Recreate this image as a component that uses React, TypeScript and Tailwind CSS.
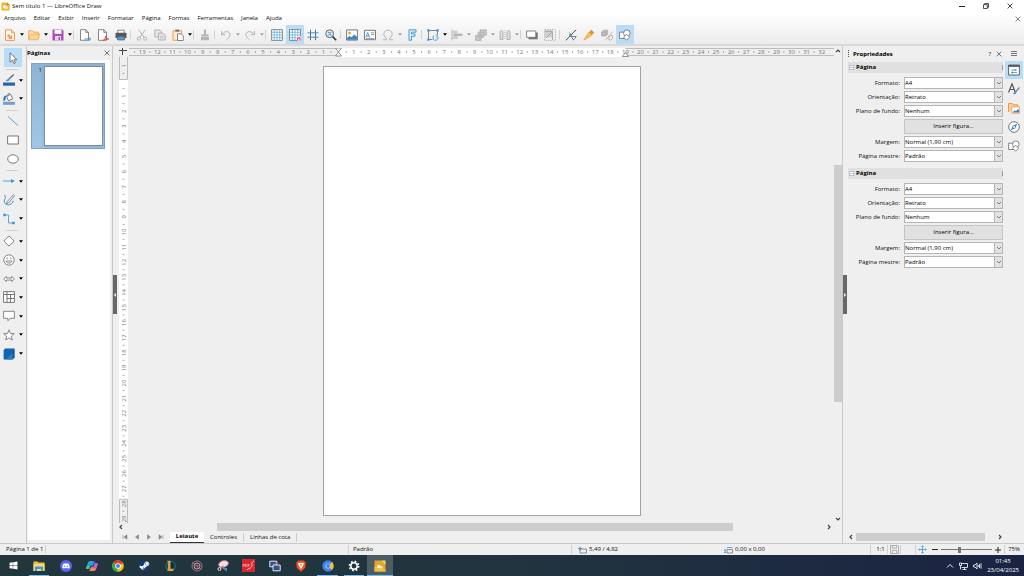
import type { ReactNode } from "react";
import clsx from "clsx";
import { FaDiscord, FaSteamSymbol, FaWindows } from "react-icons/fa";

const G = "#6b6b6b"; // icon outline
const D = "#b4b4b4"; // disabled icon
const B = "#3a94d0"; // blue accent

function Svg({ children, className = "w-3 h-3" }: { children: ReactNode; className?: string }) {
  return (
    <svg viewBox="0 0 12 12" fill="none" className={clsx("shrink-0", className)} aria-hidden="true">
      {children}
    </svg>
  );
}

const icons: Record<string, ReactNode> = {
  new: (
    <>
      <path d="M1.500 .8h6l3 3v7.600h-9z" fill="#fff6ee" stroke="#eb9a5b" />
      <path d="M7.500 .8v3h3" stroke="#eb9a5b" />
      <path d="M3.500 5.500h2.500v2.500H3.500zM5 7.500l3-1.500v4H4.500z" fill="#eda06a" />
    </>
  ),
  open: (
    <>
      <path d="M.7 10.500V1.800h3.800l1 1.400h4.800v2" fill="#fdeacb" stroke="#eda94b" />
      <path d="M.7 10.800 2.400 5h9.200l-1.500 5.800z" fill="#fbd596" stroke="#eda94b" strokeWidth=".8" />
    </>
  ),
  save: (
    <>
      <path d="M.5 .5h9.800l1.200 1.200v9.800H.5z" fill="#a94fb5" />
      <path d="M2.500 .8h7v4h-7z" fill="#fff" />
      <path d="M3 7h6v4.500H3z" fill="#ead0ed" />
      <path d="M6.500 8h1.500v3H6.500z" fill="#a94fb5" />
    </>
  ),
  export: (
    <>
      <path d="M1.500 .7h5.300l2.700 2.700v7.900h-8z" fill="#fff" stroke={G} strokeWidth=".8" />
      <path d="M6.800 .7v2.700h2.700" stroke={G} strokeWidth=".8" />
      <path d="M5.500 10H11.500M9.700 8.200l1.800 1.800-1.800 1.800" stroke={B} />
    </>
  ),
  pdf: (
    <>
      <path d="M1.500 .7h5.300l2.700 2.700v7.900h-8z" fill="#fff" stroke={G} strokeWidth=".8" />
      <path d="M6.800 .7v2.700h2.700" stroke={G} strokeWidth=".8" />
      <path d="M6.200 11.500c1.600-1.200 2.400-2.600 2.300-4.400.3 2 1.300 2.700 3.200 2.900-2 0-4 .3-5.500 1.500z" stroke="#e0383e" />
    </>
  ),
  print: (
    <>
      <path d="M2.800 4V1.200h6.400V4" fill="#fff" stroke={G} strokeWidth=".8" />
      <rect x=".5" y="3.800" width="11" height="5.400" rx=".8" fill="#57585a" />
      <path d="M2.500 7.300h7v3.700h-7z" fill="#4d9ad5" stroke="#57585a" strokeWidth=".6" />
    </>
  ),
  cut: (
    <>
      <path d="M2.800 .8 8 8.200M9.200 .8 4 8.200" stroke={D} />
      <circle cx="2.900" cy="9.600" r="1.600" stroke={D} />
      <circle cx="9.100" cy="9.600" r="1.600" stroke={D} />
    </>
  ),
  copy: (
    <>
      <path d="M.8 1h5l1.700 1.700V8H.8z" fill="#e6e6e6" stroke={D} />
      <path d="M4.500 4h4.300l2.400 2.200V11H4.500z" fill="#e6e6e6" stroke={D} />
      <path d="M6 7.300h3.500M6 9h3.500" stroke={D} strokeWidth=".7" />
    </>
  ),
  paste: (
    <>
      <path d="M1 1.800h8.600v9.400H1z" fill="#fdebd3" stroke="#eda040" />
      <path d="M3.300 .6h4v2h-4z" fill="#6b6b6b" />
      <path d="M5.500 4.800h3.600L11.300 7v4.500H5.500z" fill="#fff" stroke={G} strokeWidth=".8" />
    </>
  ),
  clone: (
    <>
      <path d="M5 .6h2v4.600H5z" fill={D} />
      <path d="M2.500 5.200h7v2h-7zM2 7.800h8v3.400H2z" fill={D} />
    </>
  ),
  undo: <path d="M1.500 2v3.700h3.700M1.800 5.500C4 2.300 8 1.800 9.500 4c1.500 2.500-.5 4.800-3 7" stroke={D} />,
  redo: <path d="M10.500 2v3.700H6.800M10.200 5.500C8 2.300 4 1.800 2.500 4 1 6.500 3 8.800 5.500 11" stroke={D} />,
  grid: (
    <>
      <path d="M.6 .6h10.800v10.800H.6z" fill="#fff" stroke={G} strokeWidth=".8" />
      <path d="M3.300 1v10M6 1v10M8.700 1v10M1 3.300h10M1 6h10M1 8.700h10" stroke="#58a6da" strokeWidth=".7" />
    </>
  ),
  snap: (
    <>
      <path d="M.6 .6h10.800v10.800H.6z" fill="#fff" stroke={G} strokeWidth=".8" />
      <path d="M3.300 1v10M6 1v10M8.700 1v10M1 3.300h10M1 6h10M1 8.700h10" stroke="#58a6da" strokeWidth=".7" />
      <path d="M8 7.500h4V12H8z" fill="#fff" />
      <path d="M8.700 11.800v-2c0-1.600 2.400-1.600 2.400 0v2" stroke="#dd3c43" strokeWidth="1.100" />
    </>
  ),
  guides: (
    <>
      <path d="M3.500 .8v10.400M8.500 .8v10.400" stroke={G} />
      <path d="M.6 3.800h10.800M.6 8.200h10.800" stroke={B} />
    </>
  ),
  zoom: (
    <>
      <circle cx="4.700" cy="4.700" r="3.900" fill="#d8eafa" stroke={G} />
      <path d="M3 6.500 6.500 3M3 3.600h2M4.500 6h2" stroke={B} strokeWidth=".9" />
      <path d="m7.600 7.600 3.600 3.600" stroke="#333" strokeWidth="1.600" />
    </>
  ),
  image: (
    <>
      <path d="M.6 .9h10.800v10.200H.6z" fill="#fff" stroke={G} strokeWidth=".9" />
      <circle cx="3.500" cy="4" r="1.500" fill="#f2a33c" />
      <path d="M1 10.700V9l2.500-2 2 1.300L8.500 5.500 11 8v2.700z" fill="#3a83c4" />
    </>
  ),
  textbox: (
    <>
      <path d="M.5 1.300h11v9.400H.5z" fill="#fff" stroke={G} strokeWidth=".9" />
      <path d="m1.800 8.500 1.900-5 1.900 5M2.400 7h2.600" stroke={B} strokeWidth=".9" />
      <path d="M7 3.800h3.300M7 5.600h3.300M2 9.600h8" stroke={G} strokeWidth=".7" />
    </>
  ),
  omega: <path d="M1 10.800h3.400V9.300C.5 7 1.200 1.200 6 1.200S11.500 7 7.600 9.300v1.500H11" stroke={D} />,
  fontwork: <path d="M3 .8h7v2.400H5.500v1.700H9v2.300H5.500v4H3z" fill="#dceefa" stroke={B} strokeWidth=".9" />,
  transform: (
    <>
      <path d="M1.500 1.500h9v4M1.500 1.500v9h4" fill="none" stroke={G} strokeWidth=".8" />
      <path d="M.3 .3h2.200v2.200H.3zM9.500 .3h2.200v2.200H9.500zM.3 9.500h2.200v2.200H.3z" fill={B} />
      <path d="M7 6.500A2.600 2.600 0 1 0 11 8M8.800 5.500l2 1.300-1.800 1.500" stroke={B} strokeWidth=".9" />
    </>
  ),
  align: (
    <>
      <path d="M1 .5v11" stroke={D} />
      <path d="M1.500 1.800h5v2.700h-5zM1.500 7.300H7V10H1.500z" fill="#ccc" />
      <path d="M2.500 4.700h9v2.200h-9z" fill={D} />
    </>
  ),
  arrange: <path d="M5 .8h6.400v5.400H5zM3 3.300h5.800v5H3zM.6 6.400h5.600v5H.6z" fill="#c6c6c6" stroke="#aeaeae" strokeWidth=".7" />,
  distribute: (
    <>
      <path d="M1 10.500v-7c0-2.700 3-2.700 3 0v7zM8 10.500v-7c0-2.700 3-2.700 3 0v7z" fill="#ddd" stroke={D} />
      <path d="M6 1v10" stroke={D} strokeDasharray="1 1" />
    </>
  ),
  shadow: (
    <>
      <path d="M2.500 3.500h9.300v6.800H2.500z" fill="#777" />
      <path d="M.6 2h9.200v6.300H.6z" fill="#fff" stroke={G} strokeWidth=".8" />
    </>
  ),
  crop: (
    <>
      <path d="M.6 .6h10.800v10.800H.6z" stroke={D} strokeDasharray="1.500 1" />
      <path d="M1 1h7.500v7.500H1z" fill="#d0d0d0" />
      <path d="M1 2.500h7.500V11M2 9l6-6" stroke="#aaa" />
    </>
  ),
  points: (
    <>
      <path d="M.8 11.300C5 8 7 4 11.200 .8" stroke="#444" />
      <path d="M4.500 3.500 8.300 11.200M6.300 7.500h5L8.300 11.200" stroke="#666" strokeWidth=".8" />
      <circle cx="5.500" cy="6.400" r="1.300" fill={B} />
    </>
  ),
  glue: (
    <>
      <path d="M6 3.500 8.300 .7l3 3L8.500 6z" fill="#df8f30" />
      <path d="M5.800 3.200 8.800 6.200 4.500 9.300.8 11.200 2.700 7.500z" fill="#f8bb5c" stroke="#eda040" strokeWidth=".6" />
    </>
  ),
  extrude: (
    <>
      <path d="M.6 3.300 2.300 1.200h4.400v3.600L5 7H.6zM.6 3.300H5V7" fill="#bdbdbd" stroke="#aaa" strokeWidth=".8" />
      <path d="m4.500 11.200 7-8.500M8 8l1.500-1.500h2v3L10 11H8z" stroke={D} />
    </>
  ),
  shapes: (
    <>
      <path d="M.6 3.200h6v6.300h-6z" fill="#fff" stroke={G} strokeWidth=".8" />
      <circle cx="7.800" cy="4.200" r="3.300" fill="#fff" stroke={G} strokeWidth=".8" />
      <path d="m7.600 5.200 3 3-3 3-3-3z" fill="#fff" stroke={G} strokeWidth=".8" />
    </>
  ),
  select: <path d="M3 .8v9.400l2.300-2 1.600 3.300 1.500-.7-1.500-3.100h3z" fill="#fff" stroke={G} strokeWidth=".9" />,
  lineColor: (
    <>
      <path d="M10.800 .5 6.300 4.600" stroke="#777" strokeWidth="1.600" />
      <path d="M6.800 4.200C4.500 4 4 6.500 2.500 6.800c2 1 5-.2 4.300-2.600z" fill={B} />
      <path d="M0 8.500h12v3.200H0z" fill="#2a62ab" />
    </>
  ),
  fillColor: (
    <>
      <path d="m3.500 3.300 4-2 2.300 4.500-4.300 2z" fill="#fff" stroke={G} strokeWidth=".9" />
      <path d="M5 3.500V1c0-1 2-1 2 .5" stroke={G} strokeWidth=".8" />
      <path d="M4 2.500C0 2.500 .3 5 .5 8c2 0 2.300-2 2.100-3.500z" fill="#1f7dc4" />
      <path d="M0 8.800h12v3H0z" fill="#729fcf" />
    </>
  ),
  line: <path d="m1 1.500 10 9" stroke="#58a6da" />,
  rect: <path d="M.6 2h10.800v8H.6z" fill="#fff" stroke={G} strokeWidth=".9" />,
  ellipse: <ellipse cx="6" cy="6" rx="5.300" ry="4.200" fill="#fff" stroke={G} strokeWidth=".9" />,
  arrow: (
    <>
      <path d="M0 6h9" stroke="#58a6da" />
      <path d="m8 4 4 2-4 2z" fill={B} />
    </>
  ),
  curve: (
    <>
      <path d="M1 1.500c3.500.5.500 3 .3 5.500-.2 5 7.500 5.500 9-.3" stroke={B} />
      <path d="m10.300 .8 1.200 1L5.500 9l-2 .8.600-2z" fill="#fff" stroke={G} strokeWidth=".8" />
    </>
  ),
  connector: (
    <>
      <path d="M1.500 2h4v8h5" stroke="#58a6da" />
      <path d="M.3 .8h2.500v2.500H.3zM9.200 8.700h2.500v2.500H9.200z" fill={B} />
    </>
  ),
  diamond: <path d="M6 .9 11.100 6 6 11.100.9 6z" fill="#fff" stroke={G} strokeWidth=".8" />,
  smiley: (
    <>
      <circle cx="6" cy="6" r="5.200" fill="#fff" stroke={G} strokeWidth=".8" />
      <path d="M3 7c.8 2.800 5.200 2.800 6 0z" stroke={G} strokeWidth=".8" />
      <path d="M4.200 3.500v1.400M7.800 3.500v1.400" stroke={G} />
    </>
  ),
  dblArrow: <path d="M.7 6 3.200 3.500V5h5.600V3.500L11.300 6 8.800 8.500V7H3.200v1.500z" fill="#fff" stroke={G} strokeWidth=".8" />,
  table: (
    <>
      <path d="M.6 .6h10.800v10.800H.6z" fill="#fff" />
      <path d="M.6 .6h10.800v10.800H.6zM.6 3.500h10.800M4 .6v10.800M7.500 3.500v7.900M4 7.500h7.400" stroke={G} strokeWidth=".9" />
    </>
  ),
  callout: <path d="M.6 1.300h10.800v7H7l-2 2.500-.3-2.500H.6z" fill="#fff" stroke={G} strokeWidth=".8" />,
  star: <path d="m6 .8 1.400 3.600 3.900.2-3 2.500 1 3.900L6 8.800 2.700 11l1-3.900-3-2.500 3.900-.2z" fill="#fff" stroke={G} strokeWidth=".8" />,
  cube: (
    <>
      <path d="M2 .6h9.400v8.600l-1.800 2.200H.6V2.600z" fill="#0f66b0" />
      <path d="M9.600 11.400 11.400 9.200V.6L9.600 2.800z" fill="#0a569c" />
      <path d="m3 11.400 6.600-6.600v6.600z" fill="#2b7dc4" />
    </>
  ),
  props: (
    <>
      <path d="M.6 1h10.800v10H.6z" fill="#fff" stroke="#555" strokeWidth=".9" />
      <path d="M.6 2h10.800" stroke="#555" strokeWidth="1.800" />
      <path d="M3 6h6M3 8.500h6" stroke={B} strokeWidth=".8" />
      <path d="M7 5v2M4.500 7.500v2" stroke={B} />
    </>
  ),
  styles: (
    <>
      <path d="M.5 9.500 4 .8l3.300 8.700M1.700 6.500h4.700" stroke="#555" strokeWidth="1.200" />
      <path d="m11.400 4.500-3.500 4" stroke="#888" strokeWidth="1.400" />
      <path d="M8.300 8C6 8 6.500 10.500 4.800 11c2.200.8 4.400-.5 3.500-3z" fill={B} />
    </>
  ),
  gallery: (
    <>
      <path d="M.6 10V1.500h3.700l1 1.300h4.400V5" fill="#fbd0a0" stroke="#ed9440" />
      <path d="M3.800 4.800h7.700v6.400H3.800z" fill="#fff" stroke="#ed9440" strokeWidth=".8" />
      <path d="m4.500 10.600 2.200-2.300 1.200 1 2-2.300 1 1v2.600z" fill="#3a83c4" />
    </>
  ),
  navigator: (
    <>
      <circle cx="6" cy="6" r="5.300" fill="#fff" stroke="#666" strokeWidth=".9" />
      <path d="M9.200 2.800 7.300 7.300 2.800 9.200l1.900-4.500z" fill="#2f8bd0" />
      <circle cx="6" cy="6" r=".9" fill="#fff" />
    </>
  ),
};

function Caret({ dim }: { dim?: boolean }) {
  return (
    <svg viewBox="0 0 4 3" className={clsx("w-1 h-[3px] shrink-0", dim ? "fill-[#a0a0a0]" : "fill-black")} aria-hidden="true">
      <path d="M0 .3h4L2 2.700z" />
    </svg>
  );
}

function Cross({ className }: { className?: string }) {
  return (
    <svg viewBox="0 0 6 6" className={clsx("w-[6px] h-[6px]", className)} stroke="currentColor" strokeWidth=".8" aria-hidden="true">
      <path d="m.6.6 4.800 4.800M5.400.6.6 5.400" />
    </svg>
  );
}

const chevrons = {
  up: "M1 4 3 2l2 2",
  down: "M1 2l2 2 2-2",
  left: "M4 1 2 3l2 2",
  right: "M2 1l2 2-2 2",
};

function Chevron({ dir }: { dir: keyof typeof chevrons }) {
  return (
    <svg viewBox="0 0 6 6" className="w-[6px] h-[6px] shrink-0" fill="none" stroke="#444" strokeWidth="1.200" aria-hidden="true">
      <path d={chevrons[dir]} />
    </svg>
  );
}

// "|" is a separator, "+" after a name adds a drop-down caret,
// "-" the same with a disabled caret, "*" marks a pressed button
const toolbar =
  "new+ open+ save+ | export pdf print | cut copy paste+ | clone | undo- redo- | grid snap* guides zoom | image textbox omega- fontwork | transform+ align- arrange- distribute- | shadow crop | points glue extrude shapes*".split(" ");

const menus = ["Arquivo", "Editar", "Exibir", "Inserir", "Formatar", "Página", "Formas", "Ferramentas", "Janela", "Ajuda"];

function TopBar() {
  return (
    <header className="bg-gradient-to-b from-white from-30% to-[#ececec] border-b-2 border-[#d9d9d9]">
      <div className="flex items-center h-3 pl-px pr-[11px]">
        <svg viewBox="0 0 10 10" className="w-[9px] h-[9px]" aria-hidden="true">
          <path d="M.5.5h6.300L9.500 3v6.500h-9z" fill="#edb52f" />
          <path d="M6.800.5 9.500 3H6.800z" fill="#a8821c" />
          <circle cx="4" cy="5.500" r="1.800" fill="#fff" />
          <path d="M5 5h2.500v2.500H5z" fill="#fff5d8" />
        </svg>
        <h1 className="ml-[2px] flex-1">Sem título 1 — LibreOffice Draw</h1>
        <div className="flex items-center gap-[18px]">
          <button aria-label="Minimizar">
            <svg viewBox="0 0 6 6" className="w-[6px] h-[6px]" stroke="#222" aria-hidden="true"><path d="M0 3.500h6" /></svg>
          </button>
          <button aria-label="Restaurar">
            <svg viewBox="0 0 6 6" className="w-[6px] h-[6px]" fill="none" stroke="#222" strokeWidth=".8" aria-hidden="true">
              <path d="M.5 1.700h3.800v3.800H.5zM1.700 1.700V.5h3.800v3.800H4.300" />
            </svg>
          </button>
          <button aria-label="Fechar"><Cross /></button>
        </div>
      </div>
      <div className="flex items-center h-[13px] pl-1 pr-[3px]">
        <nav className="flex gap-2 flex-1">
          {menus.map(m => <button key={m}>{m}</button>)}
        </nav>
        <button aria-label="Fechar documento"><Cross className="text-[#666]" /></button>
      </div>
      <div className="flex items-center h-[19px] pl-px">
        {toolbar.map((item, i) => {
          if (item === "|") return <span key={i} className="w-[3px] h-[9px] border-l border-[#d0d0d0]" />;
          const name = item.replace(/[-+*]/, "");
          return (
            <button key={i} aria-label={name} className="flex items-center h-full">
              <span className={clsx("w-[18px] h-full flex items-center justify-center", item.endsWith("*") && "bg-[#b9dcf7]")}>
                <Svg>{icons[name]}</Svg>
              </span>
              {/[-+]$/.test(item) && <span className="w-[6px] flex justify-center"><Caret dim={item.endsWith("-")} /></span>}
            </button>
          );
        })}
      </div>
    </header>
  );
}

function ToolGroup({ names, className, caret = true }: { names: string[]; className: string; caret?: boolean }) {
  return (
    <div className={clsx("grid auto-rows-fr", className)}>
      {names.map(n => (
        <button key={n} aria-label={n} className={clsx("flex items-center min-h-0", caret ? "pl-[3px] gap-1" : "pl-[7px]")}>
          <Svg>{icons[n]}</Svg>
          {caret && <Caret />}
        </button>
      ))}
    </div>
  );
}

function ToolBox() {
  const sep = <hr className="ml-[6px] w-3 mt-[2px] mb-px border-[#cfcfcf]" />;
  return (
    <aside className="w-[27px] shrink-0 pt-[2px] border-r border-[#c9c9c9]">
      <button aria-label="select" className="ml-1 w-[18px] h-[19px] bg-[#b9dcf7] flex items-center justify-center">
        <Svg>{icons.select}</Svg>
      </button>
      {sep}
      <ToolGroup className="h-[37px]" names={["lineColor", "fillColor"]} />
      {sep}
      <ToolGroup className="h-[56px]" names={["line", "rect", "ellipse"]} caret={false} />
      {sep}
      <ToolGroup className="h-[56px]" names={["arrow", "curve", "connector"]} />
      {sep}
      <ToolGroup className="h-[131px]" names={["diamond", "smiley", "dblArrow", "table", "callout", "star", "cube"]} />
    </aside>
  );
}

function PagesPanel() {
  return (
    <aside className="w-[86px] shrink-0 flex flex-col pb-[3px] pr-[2px] border-r border-[#c9c9c9]">
      <div className="flex items-center justify-between h-[14px]">
        <h2 className="font-bold text-black">Páginas</h2>
        <button aria-label="Fechar painel"><Cross className="text-[#555]" /></button>
      </div>
      <div className="flex-1 ml-px bg-white pt-[3px] pl-[3px]">
        <button className="flex w-[74px] h-[86px] bg-gradient-to-b from-[#8fb4d3] to-[#a0c5e6] border border-[#7ba3c6] py-[2px] pr-px">
          <span className="flex-1 text-right pr-[2px]">1</span>
          <span className="w-[59px] h-full bg-white border border-[#7d8d9c] shadow-sm" />
        </button>
      </div>
    </aside>
  );
}

const CM = 15.1;
const range = (from: number, to: number) => Array.from({ length: to - from + 1 }, (_, i) => from + i);

// origin is the middle of the strip, where the page is centred too
function HRuler() {
  const zero = -143;
  return (
    <svg className="w-full h-[9px] block" aria-hidden="true">
      <path d="M0 .5h2000M0 7.500h2000" stroke="#bcbcbc" />
      <svg x="50%" className="overflow-visible">
        <rect x={zero} width={19 * CM} height="9" fill="#fff" />
        {range(-13, 32).filter(n => n !== 0).map(n => (
          <text key={n} x={zero + n * CM} y="6" textAnchor="middle" className="text-[6px] fill-[#777]">{Math.abs(n)}</text>
        ))}
        {range(-14, 31).map(n => (
          <path key={n} d={`M${zero + (n + 0.5) * CM} 3v2`} stroke="#999" strokeWidth=".8" />
        ))}
        <path d={`M${zero - 3} 0h6l-3 4 3 4h-6l3-4zM${zero + 19 * CM - 3} 8.500h6l-3-4z`} fill="#fff" stroke="#777" strokeWidth=".8" />
      </svg>
    </svg>
  );
}

function VRuler() {
  const zero = 24;
  const end = zero + 27.7 * CM;
  return (
    <svg className="w-[9px] h-full block" aria-hidden="true">
      <rect width="9" height="100%" fill="#fff" />
      <path d={`M.5 0v22.500h8V0M.5 1000V${end}h8V1000`} fill="#efefef" stroke="#bcbcbc" />
      {range(-1, 29).filter(n => n !== 0).map(n => (
        <text key={n} transform={`translate(7 ${zero + n * CM}) rotate(-90)`} textAnchor="middle" className="text-[6px] fill-[#777]">
          {Math.abs(n)}
        </text>
      ))}
      {range(-1, 28).map(n => (
        <path key={n} d={`M3.500 ${zero + (n + 0.5) * CM}h2`} stroke="#999" strokeWidth=".8" />
      ))}
    </svg>
  );
}

const navIcons = [
  ["Primeira", "M1 1v4M5 .8v4.400L2 3z"],
  ["Anterior", "M4.500 .8v4.400L1.500 3z"],
  ["Próxima", "M1.500 .8v4.400L4.500 3z"],
  ["Última", "M5 1v4M1 .8v4.400L4 3z"],
];

function Canvas() {
  return (
    <main className="flex-1 min-w-0 flex flex-col">
      <div className="flex-1 min-h-0 flex">
        <div className="w-3 shrink-0 flex flex-col items-end pt-[2px]">
          <svg viewBox="0 0 8 8" className="w-2 h-2 mr-[2px] mb-px shrink-0" stroke="#444" aria-hidden="true"><path d="M0 2.500h8M3.500 0v7" /></svg>
          <div className="flex-1 min-h-0 mr-px"><VRuler /></div>
        </div>
        <div className="flex-1 min-w-0 flex flex-col pt-[2px]">
          <HRuler />
          <div className="flex-1 min-h-0 overflow-hidden flex justify-center pt-[9px]">
            <div className="w-[318px] h-[450px] bg-white border border-[#a3a3a3]" />
          </div>
        </div>
        <div className="w-2 shrink-0 flex flex-col items-center justify-between pt-[2px] pb-px">
          <Chevron dir="up" />
          <div className="flex-1 w-full pt-[111px]"><div className="h-[237px] bg-[#cdcdcd]" /></div>
          <Chevron dir="down" />
        </div>
      </div>
      <div className="h-2 mr-[10px] flex items-center pl-px">
        <Chevron dir="left" />
        <div className="flex-1 h-full px-[93px]"><div className="h-full bg-[#cdcdcd]" /></div>
        <Chevron dir="right" />
      </div>
      <div className="h-3 flex items-center pl-[5px]">
        <div className="flex gap-[6px] mr-[6px]">
          {navIcons.map(([label, d]) => (
            <button key={label} aria-label={label}>
              <svg viewBox="0 0 6 6" className="w-[6px] h-[6px]" fill="#888" stroke="#888" strokeWidth=".6" aria-hidden="true"><path d={d} /></svg>
            </button>
          ))}
        </div>
        <button className="w-[34px] h-[11px] bg-white border-b border-[#333] font-bold text-black">Leiaute</button>
        <button className="px-[6px] border-r border-[#ccc]">Controles</button>
        <button className="px-[6px] border-r border-[#ccc]">Linhas de cota</button>
      </div>
    </main>
  );
}

function Splitter({ dir }: { dir: "left" | "right" }) {
  return (
    <div className={clsx("shrink-0 border-[#c9c9c9] flex items-center", dir === "left" ? "w-1" : "w-[5px] border-l")}>
      <button aria-label="Recolher painel" className="w-1 h-[39px] bg-[#686868] flex items-center justify-center">
        <svg viewBox="0 0 4 4" className="w-1 h-1" fill="#fff" aria-hidden="true">
          <path d={dir === "left" ? "M3 0v4L1 2z" : "M1 0v4l2-2z"} />
        </svg>
      </button>
    </div>
  );
}

function Field({ id, label, value }: { id: string; label: string; value: string }) {
  return (
    <div className="flex items-center h-3">
      <label htmlFor={id} className="flex-1 text-right pr-1">{label}:</label>
      <div className="relative w-[99px] h-full">
        <select id={id} defaultValue={value} className="appearance-none block w-full h-full bg-white border border-[#b5b5b5] text-black outline-none">
          <option>{value}</option>
        </select>
        <span className="absolute right-0 top-0 w-[9px] h-full bg-[#e2e2e2] border border-[#b5b5b5] flex items-center justify-center pointer-events-none">
          <svg viewBox="0 0 6 6" className="w-[6px] h-[6px]" fill="none" stroke="#666" strokeWidth=".8" aria-hidden="true"><path d="m1 2 2 2 2-2" /></svg>
        </span>
      </div>
    </div>
  );
}

function PageSection({ id }: { id: string }) {
  return (
    <section className="pb-[6px]">
      <div className="flex items-center h-[11px] bg-[#e0e0e0] mb-1 pl-[1px]">
        <svg viewBox="0 0 5 5" className="w-[5px] h-[5px]" fill="#fff" stroke="#8a9bb0" strokeWidth=".6" aria-hidden="true">
          <path d="M.4.4h4.200v4.200H.4zM1.200 2.500h2.600" />
        </svg>
        <h3 className="font-bold text-black ml-[2px] flex-1">Página</h3>
        <span className="w-px h-[5px] bg-[#999]" />
      </div>
      <div className="flex flex-col gap-[2px]">
        <Field id={id + "-format"} label="Formato" value="A4" />
        <Field id={id + "-orient"} label="Orientação" value="Retrato" />
        <Field id={id + "-bg"} label="Plano de fundo" value="Nenhum" />
        <button className="self-end w-[99px] h-[15px] bg-[#e1e1e1] border border-[#c4c4c4] text-black">Inserir figura...</button>
        <Field id={id + "-margin"} label="Margem" value="Normal (1,90 cm)" />
        <Field id={id + "-master"} label="Página mestre" value="Padrão" />
      </div>
    </section>
  );
}

function Sidebar() {
  return (
    <>
      <aside className="w-[156px] shrink-0 flex flex-col pl-px pb-[2px]">
        <div className="flex items-center h-4 pr-px">
          <svg viewBox="0 0 2 8" className="w-[2px] h-2 mr-[3px]" fill="#555" aria-hidden="true">
            <path d="M0 0h1v1H0zM0 2h1v1H0zM0 4h1v1H0zM0 6h1v1H0z" />
          </svg>
          <h2 className="font-bold text-black flex-1">Propriedades</h2>
          <button aria-label="Ajuda" className="mr-[5px]">?</button>
          <button aria-label="Fechar barra lateral"><Cross className="text-[#555]" /></button>
        </div>
        <div className="flex-1">
          <PageSection id="a" />
          <PageSection id="b" />
        </div>
        <div className="flex items-center h-2">
          <Chevron dir="left" />
          <div className="flex-1 h-full pl-[2px] pr-[12px]"><div className="h-full bg-[#cdcdcd]" /></div>
          <Chevron dir="right" />
        </div>
      </aside>
      <nav className="w-[21px] shrink-0 flex flex-col items-center">
        <button aria-label="Menu" className="h-[15px]">
          <svg viewBox="0 0 6 6" className="w-[6px] h-[6px]" stroke="#444" strokeWidth=".7" aria-hidden="true"><path d="M0 .5h6M0 2.500h6M0 4.500h6" /></svg>
        </button>
        {["props", "styles", "gallery", "navigator", "shapes"].map((n, i) => (
          <button key={n} aria-label={n} className={clsx("w-[18px] h-[18px] mb-px flex items-center justify-center", i === 0 && "bg-[#b9dcf7]")}>
            <Svg>{icons[n]}</Svg>
          </button>
        ))}
      </nav>
    </>
  );
}

function StatusBar() {
  const cell = "border-l border-[#d0d0d0] h-[9px] flex items-center";
  return (
    <footer className="h-3 flex items-center border-t border-[#c9c9c9] pl-[6px] pr-[4px]">
      <span className="w-[39px] whitespace-nowrap">Página 1 de 1</span>
      <span className={clsx(cell, "w-[303px]")} />
      <span className={clsx(cell, "w-[223px] pl-1")}>Padrão</span>
      <span className={clsx(cell, "flex-1 pl-[6px]")}>
        <svg viewBox="0 0 9 8" className="w-[9px] h-2 mr-[2px]" fill="none" aria-hidden="true">
          <path d="M2 3h6.500v4H2z" stroke="#777" strokeWidth=".8" />
          <path d="M0 2.500h4M2 .5v4" stroke={B} strokeWidth=".9" />
        </svg>
        <span className="w-[135px]">5,49 / 4,82</span>
        <svg viewBox="0 0 9 8" className="w-[9px] h-2 mr-[2px]" fill="none" aria-hidden="true">
          <path d="M3 3.500h5.500v3.500H3z" stroke="#777" strokeWidth=".8" />
          <path d="M3 1.500h5.500M1 3.500V7M0 4.500l1-1 1 1M0 6l1 1 1-1" stroke={B} strokeWidth=".8" />
        </svg>
        0,00 x 0,00
      </span>
      <span className={clsx(cell, "w-[17px] pl-[5px]")}>1:1</span>
      <span className={clsx(cell, "w-[13px] pl-[2px]")}>
        <Svg className="w-[9px] h-[9px]"><path d="M.6.6h9.600l1.200 1.200v9.600H.6zM3 .6V4h6V.6M3 11V7h6v4" stroke="#999" /></Svg>
      </span>
      <span className={clsx(cell, "w-[15px]")} />
      <span className={clsx(cell, "w-[89px] pl-[2px]")}>
        <Svg className="w-[9px] h-[9px]">
          <path d="M6 1v10M1 6h10M4.500 2.500 6 1l1.500 1.500M4.500 9.500 6 11l1.500-1.500M2.500 4.500 1 6l1.500 1.500M9.500 4.500 11 6 9.500 7.500" stroke={B} />
        </Svg>
        <button aria-label="Reduzir" className="ml-[5px] w-[6px] h-px bg-[#222]" />
        <input
          type="range"
          aria-label="Zoom"
          defaultValue={36}
          className="appearance-none mx-[3px] w-[51px] h-[7px] bg-linear-to-b from-transparent from-45% via-[#777] via-50% to-transparent to-60% [&::-webkit-slider-thumb]:appearance-none [&::-webkit-slider-thumb]:w-[3px] [&::-webkit-slider-thumb]:h-[6px] [&::-webkit-slider-thumb]:bg-[#777]"
        />
        <button aria-label="Ampliar">
          <svg viewBox="0 0 6 6" className="w-[6px] h-[6px]" stroke="#222" aria-hidden="true"><path d="M0 3h6M3 0v6" /></svg>
        </button>
      </span>
      <span className={clsx(cell, "pl-[3px]")}>75%</span>
    </footer>
  );
}

const tasks: { name: string; open?: boolean; active?: boolean; icon: ReactNode }[] = [
  { name: "Iniciar", icon: <FaWindows className="w-[9px] h-[9px] text-white" /> },
  {
    name: "Explorador", open: true,
    icon: <Svg><path d="M.5 1.500h4l1 1h6v8.500H.5z" fill="#f5bd3c" /><path d="M.5 4h11v7H.5z" fill="#fbd96c" /><path d="M2 6.500h8V11H8V9H4v2H2z" fill="#3a98e0" /></Svg>,
  },
  {
    name: "Discord",
    icon: <span className="w-3 h-3 rounded-full bg-[#5865f2] flex items-center justify-center"><FaDiscord className="w-2 h-2 text-white" /></span>,
  },
  {
    name: "Copilot",
    icon: (
      <Svg>
        <path d="M4 1h4.500L7 5.500H4.500L3.500 9H1C0 9 0 8 .3 7L2 2.500Q2.500 1 4 1z" fill="#28a5dd" />
        <path d="M3 6 2 9H1C0 9 0 8 .3 7z" fill="#79c63f" />
        <path d="M8 11H3.500L5 6.500h2.500L8.500 3H11c1 0 1 1 .7 2L10 9.500Q9.500 11 8 11z" fill="#c65bc5" />
        <path d="M8 11H3.500l1-3h6z" fill="#f08a4b" />
        <path d="M6.500 1h2q1 .5 1.200 2H8.500z" fill="#3256c8" />
      </Svg>
    ),
  },
  {
    name: "Chrome",
    icon: (
      <Svg>
        <circle cx="6" cy="6" r="5.800" fill="#fbc116" />
        <path d="M6 6 1 3a5.800 5.800 0 0 1 10 0z" fill="#e33b2e" />
        <path d="M6 6 1 3a5.800 5.800 0 0 0 4.500 8.800z" fill="#2da94f" />
        <circle cx="6" cy="6" r="2.800" fill="#fff" />
        <circle cx="6" cy="6" r="2.100" fill="#4285f4" />
      </Svg>
    ),
  },
  {
    name: "Steam",
    icon: <span className="w-3 h-3 rounded-full bg-[#173a68] flex items-center justify-center"><FaSteamSymbol className="w-[11px] h-[11px] text-white" /></span>,
  },
  {
    name: "League of Legends",
    icon: <Svg><circle cx="6.500" cy="6" r="4.700" stroke="#1c7f8c" fill="#12303c" /><path d="M3 .8h3.500v8H10L9 11H3l.8-1.500v-7.500z" fill="#d2a446" /></Svg>,
  },
  {
    name: "Jogo",
    icon: <Svg><circle cx="6" cy="6" r="5" stroke="#b98794" strokeWidth=".8" /><circle cx="6" cy="6" r="3" stroke="#d0a2ac" /><path d="m1 2 10 8M6 3v6M3.500 6h5" stroke="#b26474" strokeWidth=".8" /></Svg>,
  },
  {
    name: "Snipping",
    icon: <Svg><ellipse cx="6.500" cy="4" rx="5" ry="3.300" transform="rotate(-15 6.500 4)" fill="#e6e3e5" stroke="#d56470" strokeWidth=".8" /><path d="m2.500 8.500 4-2.500M5 8l4 1" stroke="#d5505c" /><circle cx="2.500" cy="9" r="1.500" stroke="#ddd" /><path d="M6 8h4v3.500L7.500 10z" fill="#3394c6" /></Svg>,
  },
  {
    name: "PDF",
    icon: (
      <span className="relative w-[13px] h-[13px] bg-[#db2630] flex items-center text-[4px] leading-none text-white">
        PDF
        <svg viewBox="0 0 13 13" className="absolute inset-0" fill="none" stroke="#fff" strokeWidth=".7" aria-hidden="true"><path d="M12 2C8 4 11 6 9.500 8S6 9 5 11" /></svg>
      </span>
    ),
  },
  {
    name: "Máquinas",
    icon: <Svg><path d="M.8 1.200h7v5.600h-7z" fill="#27548c" stroke="#e4e9ef" /><path d="M4 5h7.200v5.800H4z" fill="#27548c" stroke="#e4e9ef" /><path d="M5.500 3.500h3.500v3.500" stroke="#d35a60" /></Svg>,
  },
  {
    name: "Brave",
    icon: <Svg><path d="M3.500.5h5l2.300 2-.7 5.500L6 11.700 1.900 8l-.7-5.500z" fill="#f4511e" /><path d="m3 3.300 3-.6 3 .6-1.200 3L6 9.300l-1.800-3z" fill="#fff" /><path d="M5.300 4h1.400L6 7z" fill="#f4511e" /></Svg>,
  },
  {
    name: "Navegador", open: true,
    icon: <Svg><circle cx="6" cy="6" r="5.700" fill="#3f82ef" /><path d="M6 6 10 2a5.700 5.700 0 0 1 0 8z" fill="#f9c323" /><circle cx="6" cy="6" r="2.600" fill="#b9d3fa" /><circle cx="6" cy="6" r="1.900" fill="#3f82ef" /></Svg>,
  },
  {
    name: "Configurações", open: true,
    icon: <Svg><circle cx="6" cy="6" r="3.200" stroke="#fff" strokeWidth="1.500" /><circle cx="6" cy="6" r="4.700" stroke="#fff" strokeWidth="1.500" strokeDasharray="1.700 2" /></Svg>,
  },
  {
    name: "LibreOffice Draw", open: true, active: true,
    icon: <Svg><path d="M.5.500h7.500l3.500 3v8H.5z" fill="#e9a52a" /><path d="M.5 11.500v-5l11 3v2z" fill="#f0bf3c" /><path d="M7.500.5h4v4z" fill="#e8e36b" /><circle cx="4.800" cy="6.500" r="1.800" fill="#fff" /><path d="M6 6h2.500v2.500H6z" fill="#fdeab0" /></Svg>,
  },
];

function TaskBar() {
  return (
    <div className="h-[21px] shrink-0 flex items-stretch bg-gradient-to-r from-[#21363d] via-[#21343f] via-50% to-[#1b2342] text-white">
      <div className="flex w-[393px]">
        {tasks.map(t => (
          <button
            key={t.name}
            aria-label={t.name}
            className={clsx("relative flex-1 flex items-center justify-center", t.active && "bg-[#4d5d65]")}
          >
            {t.icon}
            {t.open && <span className={clsx("absolute bottom-0 h-px bg-[#76b9ed]", t.active ? "inset-x-0" : "inset-x-[3px]")} />}
          </button>
        ))}
      </div>
      <div className="flex-1" />
      <div className="flex items-center gap-[5px] pr-[5px]">
        <svg viewBox="0 0 8 8" className="w-2 h-2" fill="none" stroke="#fff" strokeWidth=".9" aria-hidden="true"><path d="m1 5.500 3-3 3 3" /></svg>
        <svg viewBox="0 0 9 8" className="w-[9px] h-2" fill="none" stroke="#fff" strokeWidth=".8" aria-hidden="true">
          <path d="M2.500 1.500h6v4h-6M5.500 5.500v2M3.500 7.500h4M.5 1h2v2.500h-2zM1.500 3.500v4" />
        </svg>
        <svg viewBox="0 0 9 8" className="w-[9px] h-2" fill="none" stroke="#fff" strokeWidth=".8" aria-hidden="true">
          <path d="M.5 3H2l2-2v6L2 5H.5zM5.300 3v2M6.500 2v4M8 1.200v5.600" />
        </svg>
        <div className="text-center leading-[9px]">
          <div>01:45</div>
          <div>23/04/2025</div>
        </div>
      </div>
    </div>
  );
}

export default function App() {
  return (
    <div className="h-screen flex flex-col bg-[#efefef] text-[6px] leading-[9px] text-[#111] font-['Open_Sans',sans-serif] overflow-hidden">
      <TopBar />
      <div className="flex-1 min-h-0 flex">
        <ToolBox />
        <PagesPanel />
        <Splitter dir="left" />
        <Canvas />
        <Splitter dir="right" />
        <Sidebar />
      </div>
      <StatusBar />
      <TaskBar />
    </div>
  );
}
